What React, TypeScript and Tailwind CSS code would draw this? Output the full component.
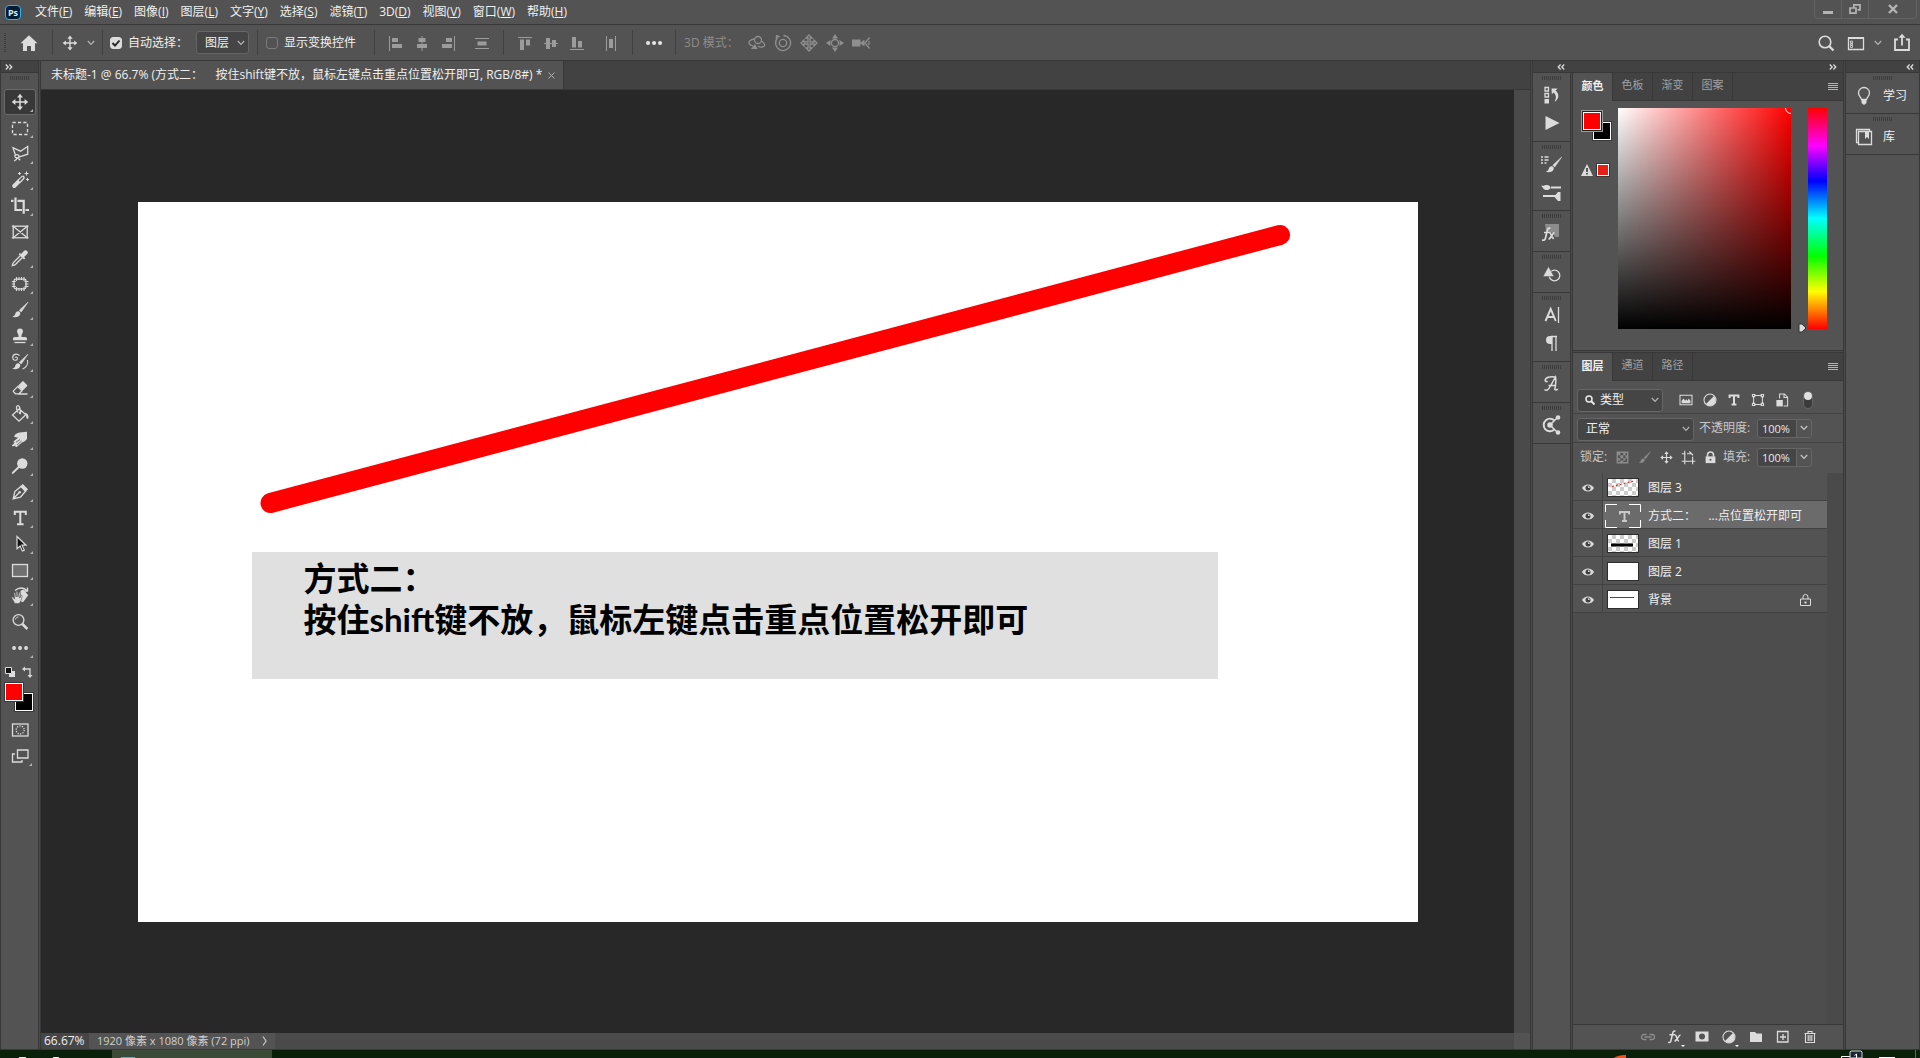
import React, { useState } from 'react';

type IconProps = { children: React.ReactNode; className?: string };

const Icon: React.FC<IconProps> = ({ children, className = 'size-5' }) => (
  <svg
    viewBox="0 0 20 20"
    className={`shrink-0 ${className}`}
    fill="none"
    stroke="currentColor"
    strokeWidth="1.3"
    aria-hidden="true"
  >
    {children}
  </svg>
);

const Chevron = ({ className = '' }: { className?: string }) => (
  <svg viewBox="0 0 8 6" className={`h-[6px] w-2 shrink-0 ${className}`} fill="none" stroke="currentColor" strokeWidth="1.2" aria-hidden="true">
    <path d="M.8 1 4 4.4 7.2 1" />
  </svg>
);

const DoubleChevron = ({ left = false }: { left?: boolean }) => (
  <svg viewBox="0 0 8 6" className="h-[6px] w-2" fill="none" stroke="#dcdcdc" strokeWidth="1.3" aria-hidden="true">
    {left ? <path d="M3.6.5 1.2 3l2.4 2.5M7.2.5 4.8 3l2.4 2.5" /> : <path d="M.8.5 3.2 3 .8 5.5M4.4.5 6.8 3 4.4 5.5" />}
  </svg>
);

const Grip = () => (
  <div className="mx-auto h-1 w-[19px] shrink-0 bg-[repeating-linear-gradient(90deg,#3d3d3d_0_1px,transparent_1px_2px)]" />
);

const Gutter = () => <div className="w-[3px] shrink-0 border-x border-[#383838] bg-[#4a4a4a]" />;

const Divider = () => <div className="h-[25px] w-px shrink-0 bg-[#404040]" />;

const moveShape = (
  <>
    <path d="M10 4v12M4 10h12" strokeWidth="1.5" />
    <path d="M10 1.8 12.9 5.4H7.1zM10 18.2 12.9 14.6H7.1zM1.8 10 5.4 7.1v5.8zM18.2 10 14.6 7.1v5.8z" fill="currentColor" stroke="none" />
  </>
);

const brushShape = (
  <>
    <path d="M18 2.2 9.3 10.2l1.9 1.9L18 2.2z" fill="currentColor" stroke="currentColor" strokeWidth=".6" />
    <path d="M8.2 11.2c-2 .2-2.6 1.3-3 2.8-.4 1.4-1.4 2.2-3 2.8 3.5.9 7.200.2 8-2.900.3-1.300-.6-2.700-2-2.700z" fill="currentColor" stroke="none" />
  </>
);

const menus = [
  ['文件', 'F'], ['编辑', 'E'], ['图像', 'I'], ['图层', 'L'], ['文字', 'Y'], ['选择', 'S'],
  ['滤镜', 'T'], ['3D', 'D'], ['视图', 'V'], ['窗口', 'W'], ['帮助', 'H'],
];

const tools: { name: string; icon: React.ReactNode; more?: boolean }[] = [
  { name: '移动工具', more: true, icon: moveShape },
  { name: '矩形选框工具', more: true, icon: <rect x="2.5" y="4.5" width="15" height="12" strokeDasharray="3.2 2.2" /> },
  {
    name: '多边形套索工具',
    more: true,
    icon: <path d="M5.6 11.8 3 3.7l7.500 3.500L17.700 2.500v7.700L9.500 12.800M4 17c1.800-.6 2.800-1.600 3-3.200M8.700 11.200c-1.300-1-3.700-.4-3.900.9-.1 1.400 2 2.200 3.400 1.500 1-.5 1.300-1.600.5-2.400zM7.300 13.500l3 2.800" />,
  },
  {
    name: '魔棒工具',
    more: true,
    icon: (
      <>
        <path d="m4.200 16 5.500-5.500" strokeWidth="4" strokeLinecap="round" />
        <path d="m9.500 11 3.300-3.400" strokeWidth="4" strokeLinecap="round" />
        <path d="m9.700 10.600 2.800-2.900" stroke="#535353" strokeWidth="1.6" strokeLinecap="round" />
        <path d="M9.500 2v3M8 3.500h3M16.500 1.500v4M14.500 3.500h4M17.500 8v3M16 9.500h3" strokeWidth="1" />
      </>
    ),
  },
  { name: '裁剪工具', more: true, icon: <path d="M5.5 1.5v12.500h6.500M1 4.800h2.500M7.500 4.800h6.200v13M15.500 14h3.500" strokeWidth="2.2" /> },
  {
    name: '图框工具',
    icon: (
      <>
        <rect x="3.2" y="4.2" width="14" height="11.6" />
        <path d="m3.500 4.500 13.500 11m0-11-13.500 11M1.800 4.200h2M1.800 15.800h2M16.500 4.200h2M16.500 15.800h2" />
      </>
    ),
  },
  {
    name: '吸管工具',
    more: true,
    icon: (
      <>
        <path d="m10.500 7.500-7 7c-1 1-.9 2.300-1.100 3 .8-.2 2 0 3-1l7-7" />
        <path d="m8.700 6.200 1.200-1.200 1.200 1.100 2.300-2.600c1-1.200 2.600-1.600 3.700-.6s.8 2.700-.4 3.700l-2.600 2.300 1.200 1.300-1.300 1.200z" fill="currentColor" stroke="none" />
      </>
    ),
  },
  {
    name: '修补工具',
    more: true,
    icon: (
      <>
        <rect x="4" y="5.2" width="12" height="9.6" rx="1.8" />
        <path d="M6.500 3v4M9 3v3M11.500 3v3M14 3v4M6.500 13v4M9 14v3M11.500 14v3M14 13v4M1.800 7.500h4M1.800 10h3M1.800 12.500h4M14.500 7.500h4M15 10h3.500M14.500 12.500h4" strokeWidth="1.1" />
      </>
    ),
  },
  { name: '画笔工具', more: true, icon: brushShape },
  {
    name: '仿制图章工具',
    more: true,
    icon: (
      <>
        <path d="M10 2.500a3 3 0 0 0-3 3c0 1.500 1.500 2.200 1.500 4.300v1.200H4.800c-1 0-1.800.8-1.800 1.800v1.500h14v-1.500c0-1-.8-1.800-1.800-1.800h-3.700V9.800c0-2.100 1.500-2.800 1.500-4.300a3 3 0 0 0-3-3z" fill="currentColor" stroke="none" />
        <path d="M4.500 16.500h11" />
      </>
    ),
  },
  {
    name: '历史记录画笔工具',
    more: true,
    icon: (
      <>
        {brushShape}
        <path d="M9.500 3.500C6.500.8 2.500 2.500 2.700 5.700c.1 2.900 3.900 3.400 4.700 1.300.5-1.700-1.500-2.600-2.300-1.300M17.500 8c.8 4-1.200 7.700-4.900 9" strokeWidth="1.1" />
      </>
    ),
  },
  {
    name: '橡皮擦工具',
    more: true,
    icon: (
      <>
        <path d="M7.800 8 12.300 3.600c.4-.4.9-.4 1.300 0l3.400 3.400c.4.4.4.9 0 1.300l-4.500 4.500z" fill="currentColor" stroke="none" />
        <path d="m7.600 8.600-4 4c-.4.4-.4.9 0 1.300l1.900 1.900h3.500l3-3zM8 16h9.500" />
      </>
    ),
  },
  {
    name: '油漆桶工具',
    more: true,
    icon: (
      <>
        <path d="M9.300 4.800 2.500 11l6.500 6.200 6.800-6.500zM8 8.500C6 5 6 2 7.700 1.700c1.800-.2 2.500 3 2.700 6.300" />
        <circle cx="10" cy="9" r="1.2" fill="currentColor" stroke="none" />
        <path d="M14.500 8.500c3 .5 4.200 2.500 4 5.200-.1 1.500-2 1.500-2.200 0 0-2.200-.3-3.700-1.800-5.200z" fill="currentColor" stroke="none" />
      </>
    ),
  },
  {
    name: '涂抹工具',
    more: true,
    icon: (
      <>
        <path d="M4.500 5.500C6 3.200 9 2.300 12 2.300l5-.5v7c-1.500 2.500-3 3.200-5 3.600l-5 4.300c-1 .9-2.200-.1-1.500-1.300l-2.200.9c-1.200.4-1.800-1-.8-1.600L5 12.500c-1.400.5-2-.9-1-1.600L8 7.800l-2-.6c-1.300.3-2.200-.6-1.500-1.700z" fill="currentColor" stroke="none" />
        <path d="m6 12.300 4-2.800M7 15l4.500-4" stroke="#535353" strokeWidth=".8" />
      </>
    ),
  },
  {
    name: '减淡工具',
    more: true,
    icon: (
      <>
        <circle cx="12.3" cy="7.5" r="5.2" fill="currentColor" stroke="none" />
        <path d="m8.500 11.300-5.700 5.600" strokeWidth="2" strokeLinecap="round" />
      </>
    ),
  },
  {
    name: '钢笔工具',
    more: true,
    icon: (
      <>
        <path d="M3.200 16.800 4.800 9.500 11 4.500l4.500 4.700-5 6zM3.500 16.500l5.300-5.500" />
        <circle cx="9.6" cy="10.3" r="1.3" fill="currentColor" stroke="none" />
        <path d="m10.500 4 2.300-2 5.200 5.200-2.200 2.500z" fill="currentColor" stroke="none" />
      </>
    ),
  },
  { name: '文字工具', more: true, icon: <path d="M4.800 7V3.700h11V7M10.300 3.700v12.600M7 16.300h6.600" strokeWidth="2" /> },
  { name: '路径选择工具', more: true, icon: <path d="M7 2.500v12.200l3.100-2.700 2.300 5 1.900-.9-2.300-4.900h4z" fill="#151515" strokeWidth="1.2" /> },
  { name: '矩形工具', more: true, icon: <rect x="2.5" y="4.5" width="15" height="12" fill="#707070" /> },
  {
    name: '旋转视图工具',
    more: true,
    icon: (
      <>
        <path d="m10.500 4.700 3-1.200 4.700 5.700-5.200 7-2.500-1z" fill="currentColor" stroke="none" />
        <path d="M4.800 17.500 1.800 12c-.4-1 .8-1.500 1.400-.7l1.500 1.800-.7-5.800c0-1 1.200-1.100 1.400-.1l.8 3.800V6c.1-.9 1.400-.9 1.500 0l.2 5 1-4.200c.3-.8 1.500-.5 1.300.4l-.5 4.900 1.200-2.400c.4-.7 1.500-.3 1.200.6-.7 3.200-1.200 5.500-3 7.200z" fill="currentColor" stroke="#535353" strokeWidth=".6" />
        <path d="M5 4.500c4-3.500 9-3.200 12 .2M17.500 1.500v3.700h-4" />
      </>
    ),
  },
  {
    name: '缩放工具',
    icon: (
      <>
        <circle cx="8.5" cy="8" r="5.4" />
        <path d="m12.400 12 5 5" strokeWidth="2.5" />
        <path d="M5.500 7.500c.3-1.500 1.500-2.500 3-2.600" strokeWidth="1" />
      </>
    ),
  },
  { name: '编辑工具栏', more: true, icon: <path d="M4 10h.1M10 10h.1M16 10h.1" strokeWidth="3.8" strokeLinecap="round" /> },
];

const alignIcons: { name: string; d: string; line: string; w: string }[] = [
  { name: '左对齐', w: 'w-[26px]', line: 'M3.500 3v15', d: 'M6 5h6v4H6zM6 11h10v4H6z' },
  { name: '水平居中对齐', w: 'w-[26px]', line: 'M10 3v15', d: 'M6.500 5h7v4h-7zM5 11h10v4H5z' },
  { name: '右对齐', w: 'w-[26px]', line: 'M16.500 3v15', d: 'M8 5h6v4H8zM4 11h10v4H4z' },
  { name: '垂直分布', w: 'w-[42px]', line: 'M3 5.500h14M3 15.500h14', d: 'M5.500 8.500h9v4h-9z' },
];

const alignIcons2: { name: string; d: string; line: string; w: string }[] = [
  { name: '顶对齐', w: 'w-[26px]', line: 'M3 4.500h14', d: 'M5 6.500h4v10.500H5zM11 6.500h4v6h-4z' },
  { name: '垂直居中对齐', w: 'w-[26px]', line: 'M3 10.500h14', d: 'M5 5h4v11H5zM11 7h4v7h-4z' },
  { name: '底对齐', w: 'w-[26px]', line: 'M3 16.500h14', d: 'M5 4h4v10.500H5zM11 8h4v6.500h-4z' },
  { name: '水平分布', w: 'w-[42px]', line: 'M5.500 3v15M14.500 3v15', d: 'M8 6h4v9H8z' },
];

const modes3d: { name: string; icon: React.ReactNode }[] = [
  { name: '环绕移动', icon: <><circle cx="11" cy="7" r="3.5" /><path d="M7.500 6C3 6.500 1 9 2.500 11c.8 1 2 1.500 3.500 2M14.300 8c4 2 4.500 5.500 1 6-1.500.2-3-.1-4.500-.7" /><path d="m4 16 4-5 2.500 5z" fill="currentColor" stroke="none" /></> },
  { name: '滚动', icon: <><circle cx="10" cy="10" r="3.7" /><path d="M4.500 5a7.500 7.500 0 1 0 6-2.500" /><path d="M2.500 6 3 1.800l4.500 1.500z" fill="currentColor" stroke="none" /></> },
  { name: '平移', icon: <path d="M10 2 7 5h2v4H5V7l-3 3 3 3v-2h4v4H7l3 3 3-3h-2v-4h4v2l3-3-3-3v2h-4V5h2z" /> },
  { name: '滑动', icon: <><circle cx="10" cy="10" r="3.500" /><path d="m10 1 3 4.500H7zM1 10l4.500-3v6zM19 10l-4.500-3v6zM10 19l-3-4.500h6z" fill="currentColor" stroke="none" /></> },
  { name: '缩放相机', icon: <><path d="M1 6.500h8.500v7H1zM9 10l4.500-3.500v7z" fill="currentColor" stroke="none" /><path d="m18.500 4.500-4.500 5.500 4.500 5.500M18 8v4" /></> },
];

const dockGroups: { name: string; icon: React.ReactNode }[][] = [
  [
    { name: '历史记录', icon: <><path d="M3 2.500h3.500V6H3zM3 8.500h3.500V12H3z" /><path d="M2.500 14H7v4.500H2.500z" fill="currentColor" stroke="none" /><path d="M9.500 3.500h6.200L13.500 5.500c4 3 4 8.500-1 11.500 2-4 2-6.500-.8-9.500L9.800 9.300z" fill="currentColor" stroke="none" /></> },
    { name: '动作', icon: <path d="M3.500 3 17.500 10l-14 7z" fill="currentColor" stroke="none" /> },
  ],
  [
    { name: '画笔设置', icon: <><path d="M-1 3h2M2.500 3h4M-1 6h2M2.500 6h4M-1 9h2M2.500 9h2" /><g transform="translate(1.5 1)">{brushShape}</g></> },
    { name: '画笔', icon: <><path d="M9 5.500h10M1 14h13" strokeWidth="2" /><path d="M-1 3.500c2.500.5 3 0 5-.5 2.500-.5 4.500 1 4.500 2.700S6 8 4 8C1.500 8 .5 5-1 3.500zM12 14.500l4-4.500h2.500v9H16z" fill="currentColor" stroke="none" /></> },
  ],
  [
    { name: '样式', icon: <><path d="M3 1h14v13h-4l-2-4-7-2z" fill="#8c8c8c" stroke="none" /><path d="M8.500 5.500C6 4.300 5.500 6 5 8.500L3.500 15c-.4 2-1.500 2.500-3.500 2M2 9.500h5.500M7.500 9.500c2 0 1.500 6 4.500 6M12.500 9.500c-2 0-3.500 6.500-6 6.500" strokeWidth="1.7" /></> },
  ],
  [
    { name: '形状', icon: <><circle cx="12.5" cy="11.5" r="5.3" /><path d="M6.500 2.500 12 12.500H1z" fill="currentColor" stroke="#535353" strokeWidth=".5" /></> },
  ],
  [
    { name: '字符', icon: <><path d="M3.500 16 8.700 4l5.100 12M5.500 12h6.400" strokeWidth="1.9" /><path d="M16.500 2v16" /></> },
    { name: '段落', icon: <><path d="M10 3H8a4 4 0 0 0 0 8h2z" fill="currentColor" stroke="none" /><path d="M9 3.500h6M10 3v15M14 3v15" /></> },
  ],
  [
    { name: '字形', icon: <path d="M2.500 15.500c2 2 4 0 6-3.500L13.500 3c.7 3 0 9-.7 12.500 1 .8 2 .5 3-.5M6.500 11.500H13M13 3C8 2 3.500 3.500 3.200 6c-.2 1.500 1.500 2 2.300 1" strokeWidth="1.5" /> },
  ],
  [
    { name: '属性', icon: <><circle cx="8" cy="10" r="6.300" strokeWidth="2" strokeDasharray="28 11" transform="rotate(50 8 10)" /><circle cx="8" cy="10" r="2.8" fill="currentColor" stroke="none" /><path d="m8 10 8-8M8 10l8 8" strokeWidth="1.5" /><circle cx="16" cy="2.500" r="2.3" fill="currentColor" stroke="none" /><circle cx="16" cy="17.5" r="2.3" fill="currentColor" stroke="none" /></> },
  ],
];

const layers = [
  { name: '图层 3', kind: 'dots' },
  { name: '方式二：\u00a0\u00a0\u00a0\u00a0...点位置松开即可', kind: 'text' },
  { name: '图层 1', kind: 'bar' },
  { name: '图层 2', kind: 'white' },
  { name: '背景', kind: 'bg' },
];

const halfCircle = (
  <>
    <circle cx="10" cy="10" r="7.500" />
    <path d="M15 5a7 7 0 0 1-10 10z" fill="currentColor" stroke="none" />
  </>
);

const Swatches = () => (
  <div className="relative h-[30px] w-[30px]">
    <button aria-label="背景色" className="absolute bottom-0 right-0 size-5 border border-[#383838] bg-black shadow-[inset_0_0_0_1px_#fff]" />
    <button aria-label="前景色" className="absolute left-0 top-0 size-5 border border-[#383838] bg-[#ff0000] shadow-[inset_0_0_0_1px_#fff]" />
  </div>
);

const MenuBar = () => (
  <header className="flex h-[25px] shrink-0 items-center border-b border-[#383838] pl-[5px] pr-[3px]">
    <div className="flex h-[15px] w-4 items-center justify-center rounded-sm border border-[#2fb4f5] bg-[#001d34] text-[9px] leading-none font-bold text-[#d8f0ff]">Ps</div>
    <nav className="flex flex-1 items-center gap-3 pl-[14px]">
      {menus.map(([label, key]) => (
        <button key={key} className="whitespace-nowrap">
          {label}(<u>{key}</u>)
        </button>
      ))}
    </nav>
    <div className="flex h-[19px] self-start rounded-b border border-t-0 border-[#636363] text-[#b4b4b4]">
      <button aria-label="最小化" className="flex w-[27px] items-center justify-center border-r border-[#636363]">
        <svg viewBox="0 0 12 12" className="size-3"><path d="M1 8h10v3H1z" fill="currentColor" /></svg>
      </button>
      <button aria-label="还原" className="flex w-[27px] items-center justify-center border-r border-[#636363]">
        <svg viewBox="0 0 12 12" className="size-3" fill="none" stroke="currentColor" strokeWidth="1.7"><path d="M4.800 4.500V1.900h6.200v5H8.500M1 5h6v5.200H1z" /></svg>
      </button>
      <button aria-label="关闭" className="flex w-[47px] items-center justify-center">
        <svg viewBox="0 0 12 12" className="size-3" fill="none" stroke="currentColor" strokeWidth="2.4"><path d="m2 2 8 8m0-8-8 8" /></svg>
      </button>
    </div>
  </header>
);

const OptionsBar = () => {
  const [autoSelect, setAutoSelect] = useState(true);
  const [transform, setTransform] = useState(false);

  return (
    <div className="flex h-9 shrink-0 items-center border-b border-[#383838] pl-1">
      <div className="h-5 w-[2px] shrink-0 bg-[repeating-linear-gradient(180deg,#3d3d3d_0_1px,transparent_1px_2px)]" />
      <button aria-label="主页" className="flex w-[46px] justify-center text-[#dcdcdc]">
        <Icon><path d="M10 2.300 1.500 10.300H4V18h4v-5h4v5h4v-7.700h2.500z" fill="currentColor" stroke="none" /></Icon>
      </button>
      <Divider />
      <button aria-label="移动工具预设" className="flex w-[49px] items-center justify-center gap-2 text-[#dcdcdc]">
        <Icon className="size-[18px]">{moveShape}</Icon>
        <Chevron className="text-[#b4b4b4]" />
      </button>
      <Divider />
      <label className="flex items-center gap-[6px] pl-[7px] whitespace-nowrap">
        <span className="relative flex size-3">
          <input
            type="checkbox"
            checked={autoSelect}
            onChange={(e) => setAutoSelect(e.target.checked)}
            className="peer size-3 appearance-none rounded-[3px] border border-[#7b7b7b] checked:border-[#dcdcdc] checked:bg-[#dcdcdc]"
          />
          <svg viewBox="0 0 12 12" className="pointer-events-none absolute inset-0 hidden size-3 peer-checked:block" fill="none" stroke="#222" strokeWidth="1.9"><path d="M2.500 6 5 8.700l4.500-5.200" /></svg>
        </span>
        自动选择：
      </label>
      <div className="relative ml-2 flex shrink-0 items-center">
        <select aria-label="自动选择对象" className="h-[23px] w-[53px] appearance-none rounded-[3px] border border-[#666] bg-[#454545] pl-2 text-xs">
          <option>图层</option>
          <option>组</option>
        </select>
        <Chevron className="pointer-events-none absolute right-1 text-[#b4b4b4]" />
      </div>
      <div className="w-2" />
      <Divider />
      <label className="flex items-center gap-[6px] pl-2 whitespace-nowrap">
        <input
          type="checkbox"
          checked={transform}
          onChange={(e) => setTransform(e.target.checked)}
          className="size-3 appearance-none rounded-[3px] border border-[#7b7b7b] checked:bg-[#dcdcdc]"
        />
        显示变换控件
      </label>
      <div className="w-[18px]" />
      <Divider />
      <div className="flex items-center pl-2 text-[#9c9c9c]">
        {alignIcons.map((a) => (
          <button key={a.name} aria-label={a.name} className={`flex justify-center ${a.w}`}>
            <Icon><path d={a.line} strokeWidth="1" /><path d={a.d} fill="currentColor" stroke="none" /></Icon>
          </button>
        ))}
      </div>
      <Divider />
      <div className="flex items-center pl-2 text-[#9c9c9c]">
        {alignIcons2.map((a) => (
          <button key={a.name} aria-label={a.name} className={`flex justify-center ${a.w}`}>
            <Icon><path d={a.line} strokeWidth="1" /><path d={a.d} fill="currentColor" stroke="none" /></Icon>
          </button>
        ))}
      </div>
      <Divider />
      <button aria-label="更多对齐选项" className="flex w-[42px] justify-center text-[#e4e4e4]">
        <Icon><path d="M4 10h.1M10 10h.1M16 10h.1" strokeWidth="4" strokeLinecap="round" /></Icon>
      </button>
      <Divider />
      <span className="pl-2 whitespace-nowrap text-[#8c8c8c]">3D 模式：</span>
      <div className="flex gap-[6px] pl-2 text-[#8f8f8f]">
        {modes3d.map((m) => (
          <button key={m.name} aria-label={m.name}><Icon>{m.icon}</Icon></button>
        ))}
      </div>
      <div className="ml-auto flex items-center pr-2 text-[#dcdcdc]">
        <button aria-label="搜索" className="mr-[10px]">
          <Icon><circle cx="9" cy="9" r="5.8" strokeWidth="1.6" /><path d="m13 13 4.500 4.500" strokeWidth="2.3" /></Icon>
        </button>
        <button aria-label="选择工作区" className="flex items-center gap-2">
          <Icon><path d="M2.500 5h15v11.500h-15zM2 5h16" /><path d="M2 4h16v2H2z" fill="currentColor" stroke="none" /><path d="M4.500 8h2v2h-2zM4.500 10.500h2v1.500h-2zM4.500 12.500h2v2h-2z" strokeWidth=".8" /></Icon>
          <Chevron className="text-[#b4b4b4]" />
        </button>
        <button aria-label="共享图像" className="ml-[10px]">
          <Icon><path d="M6 6.500H3V17h14V6.500h-3M10 12.500V4" strokeWidth="1.8" /><path d="m10 .8 3.500 4h-7z" fill="currentColor" stroke="none" /></Icon>
        </button>
      </div>
    </div>
  );
};

const Toolbar = () => {
  const [active, setActive] = useState('移动工具');

  return (
    <aside className="flex w-[38px] shrink-0 flex-col border-l border-[#383838] text-[#dcdcdc]">
      <div className="flex h-3 items-center border-b border-[#383838] bg-[#424242] pl-1"><DoubleChevron /></div>
      <div className="flex flex-col items-center pt-[3px]">
        <Grip />
        <div className="flex flex-col pt-[9px]">
          {tools.map((t) => (
            <button
              key={t.name}
              aria-label={t.name}
              onClick={() => setActive(t.name)}
              className={`relative flex h-[26px] w-8 items-center justify-center rounded-[3px] border ${
                active === t.name ? 'border-[#6a6a6a] bg-[#383838]' : 'border-transparent'
              }`}
            >
              <Icon>{t.icon}</Icon>
              {t.more && <svg viewBox="0 0 3 3" className="absolute bottom-[2px] right-[2px] size-[3px]"><path d="M3 0v3H0z" fill="#b4b4b4" /></svg>}
            </button>
          ))}
        </div>
        <div className="flex w-full items-center justify-between px-1 pt-[5px]">
          <button aria-label="默认前景色和背景色">
            <svg viewBox="0 0 10 10" className="size-[10px]"><path d="M4 4h6v6H4z" fill="#dcdcdc" /><path d="M.5.5h6v6h-6z" fill="#111" stroke="#dcdcdc" /></svg>
          </button>
          <button aria-label="切换前景色和背景色">
            <svg viewBox="0 0 12 12" className="size-3" fill="none" stroke="#dcdcdc" strokeWidth="1.3"><path d="M2 3h6v7" /><path d="M0 3 3 .5v5zM8 12l-2.500-3h5z" fill="#dcdcdc" stroke="none" /></svg>
          </button>
        </div>
        <div className="w-full pl-[3px] pt-1"><Swatches /></div>
        <button aria-label="以快速蒙版模式编辑" className="pt-2">
          <Icon><rect x="2.500" y="4" width="15.500" height="12" /><circle cx="10.2" cy="10" r="4" strokeDasharray="1.2 1.3" /></Icon>
        </button>
        <button aria-label="更改屏幕模式" className="relative pt-[6px]">
          <Icon><path d="M7.500 4H18v8H7.500z" /><path d="M5 8H2.500v8h9.500v-2" /></Icon>
          <svg viewBox="0 0 3 3" className="absolute -right-[2px] bottom-0 size-[3px]"><path d="M3 0v3H0z" fill="#b4b4b4" /></svg>
        </button>
      </div>
    </aside>
  );
};

const Document = () => (
  <main className="flex min-w-0 flex-1 flex-col">
    <div className="flex h-[29px] shrink-0 border-b border-[#383838] bg-[#424242]">
      <div className="flex items-center gap-[6px] border-r border-[#383838] bg-[#535353] pr-2 pl-[10px] whitespace-nowrap">
        <span>未标题-1 @ 66.7% (方式二：{'\u00a0\u00a0\u00a0\u00a0'}按住shift键不放，鼠标左键点击重点位置松开即可, RGB/8#) *</span>
        <button aria-label="关闭文档" className="text-[#b4b4b4]">
          <svg viewBox="0 0 7 7" className="size-[7px]" fill="none" stroke="currentColor"><path d="m.5.5 6 6m0-6-6 6" /></svg>
        </button>
      </div>
    </div>
    <div className="flex min-h-0 flex-1">
      <div className="flex min-w-0 flex-1 items-center justify-center overflow-hidden bg-[#282828]">
        <div className="relative aspect-video w-full max-w-[1280px] bg-white text-black">
          <svg viewBox="0 0 1280 720" className="absolute inset-0 size-full" aria-hidden="true">
            <path d="M132.500 301 1142 33" stroke="#ff0000" strokeWidth="20" strokeLinecap="round" />
          </svg>
          <p className="absolute left-[114px] top-[350px] h-[127px] w-[966px] bg-[#e0e0e0] py-[6px] pl-[52px] text-[33px] leading-[41px] font-bold whitespace-nowrap font-['Lato','Noto_Sans_CJK_SC',sans-serif]">
            方式二：
            <br />
            按住shift键不放，鼠标左键点击重点位置松开即可
          </p>
        </div>
      </div>
      <div className="w-4 shrink-0 bg-[#4a4a4a]" />
    </div>
    <div className="flex h-4 shrink-0 items-center bg-[#4a4a4a] leading-4 whitespace-nowrap">
      <input aria-label="缩放比例" defaultValue="66.67%" className="h-4 w-12 bg-[#464646] pl-[3px] text-xs" />
      <div className="flex h-4 items-center gap-3 bg-[#535353] px-2">
        <span className="text-[11px] text-[#d0d0d0]">1920 像素 x 1080 像素 (72 ppi)</span>
        <button aria-label="状态栏菜单">
          <svg viewBox="0 0 5 10" className="h-[10px] w-[5px]" fill="none" stroke="#c8c8c8" strokeWidth="1.2"><path d="M1 .5 4 5 1 9.500" /></svg>
        </button>
      </div>
      <div className="ml-auto h-4 w-4 bg-[#535353]" />
    </div>
  </main>
);

const PanelTabs = ({ tabs }: { tabs: string[] }) => (
  <div role="tablist" className="flex h-7 shrink-0 bg-[#424242]">
    {tabs.map((t, i) => (
      <button
        key={t}
        role="tab"
        aria-selected={i === 0}
        className={`w-10 border-r border-[#383838] pb-[2px] text-[11px] ${i === 0 ? 'bg-[#535353] font-bold' : 'border-b text-[#a0a0a0]'}`}
      >
        {t}
      </button>
    ))}
    <div className="flex flex-1 items-center justify-end border-b border-[#383838] pr-[5px]">
      <button aria-label="面板菜单">
        <svg viewBox="0 0 10 8" className="h-2 w-[10px]" stroke="#b4b4b4"><path d="M0 .5h10M0 2.500h10M0 4.500h10M0 6.500h10" /></svg>
      </button>
    </div>
  </div>
);

const ColorPanel = () => (
  <section className="shrink-0">
    <PanelTabs tabs={['颜色', '色板', '渐变', '图案']} />
    <div className="flex pb-[21px] pl-2 pt-[7px]">
      <div className="w-[37px] shrink-0 pt-[2px]">
        <div className="relative h-[31px] w-[31px]">
          <button aria-label="背景色" className="absolute bottom-0 right-0 size-5 border border-[#383838] bg-black shadow-[inset_0_0_0_1px_#fff]" />
          <button aria-label="前景色" className="absolute left-0 top-0 size-[22px] border border-[#9a9a9a] bg-[#ff0000] shadow-[inset_0_0_0_1px_#222,inset_0_0_0_2px_#fff]" />
        </div>
        <div className="flex items-center gap-[3px] pt-[22px]">
          <svg viewBox="0 0 12 12" className="size-3"><path d="M6 0 12 12H0z" fill="#dcdcdc" /><path d="M5.200 4h1.600v4H5.200zM5.200 9h1.600v1.600H5.200z" fill="#333" /></svg>
          <button aria-label="选择色域内的颜色" className="size-[14px] border border-[#383838] bg-[#e71f19] shadow-[inset_0_0_0_1px_#fff]" />
        </div>
      </div>
      <div className="relative h-[221px] flex-1 overflow-hidden bg-[linear-gradient(to_top,#000,transparent),linear-gradient(to_right,#fff,#f00)]">
        <div className="absolute -right-[6px] -top-[6px] size-3 rounded-full border border-white" />
      </div>
      <div className="relative ml-[17px] mr-4 w-[19px] shrink-0 bg-[linear-gradient(to_bottom,#f00,#f0f_17%,#00f_33%,#0ff_50%,#0f0_67%,#ff0_83%,#f00)]">
        <input type="range" min="0" max="360" defaultValue="0" aria-label="色相" className="absolute inset-0 size-full opacity-0" />
        <svg viewBox="0 0 9 10" className="absolute -bottom-1 -left-[10px] h-[10px] w-[9px]"><path d="M1 1h3l4 4-4 4H1z" fill="#dcdcdc" stroke="#333" /></svg>
      </div>
    </div>
  </section>
);

const filterIcons: { name: string; icon: React.ReactNode }[] = [
  { name: '像素图层滤镜', icon: <><path d="M2.500 4h15v12h-15z" /><path d="M4.500 14V11l2.500-3 2 3 1.500-2L12 11l1.500-3 2 3v3z" fill="currentColor" stroke="none" /></> },
  { name: '调整图层滤镜', icon: halfCircle },
  { name: '文字图层滤镜', icon: <path d="M4.500 7.500V4.500h11v3M10 4.500v11M7 15.500h6" strokeWidth="2.5" /> },
  { name: '形状图层滤镜', icon: <path d="M5 4.500h10M5 15.500h10M4.500 5v10M15.500 5v10M3 3h3v3H3zM14 3h3v3h-3zM3 14h3v3H3zM14 14h3v3h-3z" /> },
  { name: '智能对象滤镜', icon: <><path d="M7 8V2.500h6l4 4v11h-5M12.500 3v4H17" /><path d="M3 10h8v8H3z" fill="currentColor" stroke="none" /></> },
];

const lockIcons: { name: string; icon: React.ReactNode; dim?: boolean }[] = [
  { name: '锁定透明像素', dim: true, icon: <><path d="M3 3h14v14H3z" strokeWidth="1.8" /><path d="M3 3h4v4H3zM11 3h3v4h-3zM7 7h4v4H7zM14 7h3v4h-3zM3 11h4v3H3zM11 11h3v3h-3zM7 14h4v3H7z" fill="currentColor" stroke="none" /></> },
  { name: '锁定图像像素', dim: true, icon: brushShape },
  { name: '锁定位置', icon: moveShape },
  { name: '防止自动嵌套', icon: <path d="M5 1v18M1 5h5M8 5h6.500M1 15h18M15.500 9v10M11 2l5 5" strokeWidth="1.5" /> },
  { name: '锁定全部', icon: <><path d="M6 9V6.500a4 4 0 0 1 8 0V9" strokeWidth="2" /><path d="M3.500 8.500h13v9h-13z" fill="currentColor" stroke="none" /><circle cx="10" cy="13" r="1.3" fill="#535353" stroke="none" /></> },
];

const PercentField = ({ label }: { label: string }) => (
  <div className="ml-auto mr-[31px] flex items-center gap-1">
    <label className="flex items-center gap-1 whitespace-nowrap text-[#c8c8c8]">
      <span className="flex">{label}<span className="w-[6px]">:</span></span>
      <input type="text" defaultValue="100%" className="h-[19px] w-10 rounded-l-[3px] border border-[#666] bg-[#454545] pl-1 text-[11px] text-[#e8e8e8]" />
    </label>
    <button aria-label={`${label}滑块`} className="-ml-[5px] flex h-[19px] w-4 items-center justify-center rounded-r-[3px] border border-[#666] text-[#c8c8c8]">
      <Chevron />
    </button>
  </div>
);

const checker = 'bg-[repeating-conic-gradient(#ccc_0_25%,#fff_0_50%)] bg-[length:8px_8px]';

const Thumb = ({ kind }: { kind: string }) => {
  if (kind === 'text') {
    return (
      <svg viewBox="0 0 36 24" className="h-6 w-9 shrink-0" fill="none" stroke="#fff">
        <path d="M.5 8V.5H12M24 .5h11.500V8M35.500 16v7.500H24M12 23.500H.5V16" />
        <path d="M15 10.500V8h9v2.500M19.500 8v9M17 17h5" stroke="#c8c8c8" strokeWidth="2" />
      </svg>
    );
  }
  return (
    <span className={`mx-[2px] h-[19px] w-8 shrink-0 border border-[#2d2d2d] ${kind === 'dots' || kind === 'bar' ? checker : 'bg-white'}`}>
      <svg viewBox="0 0 30 17" className="size-full" fill="none">
        {kind === 'dots' && <path d="M4 7.500 26 2" stroke="#f00" strokeDasharray="2 2" />}
        {kind === 'bar' && <path d="M3 10h22" stroke="#000" strokeWidth="3" />}
        {kind === 'bg' && <path d="M2 6.500h24" stroke="#f00" />}
      </svg>
    </span>
  );
};

const LayersPanel = () => {
  const [selected, setSelected] = useState(1);

  return (
    <section className="flex min-h-0 flex-1 flex-col">
      <PanelTabs tabs={['图层', '通道', '路径']} />
      <div className="flex h-[33px] shrink-0 items-center border-b border-[#424242] pt-[6px] pl-1">
        <div className="relative flex items-center">
          <svg viewBox="0 0 10 10" className="pointer-events-none absolute left-2 size-[10px]" fill="none" stroke="#e8e8e8"><circle cx="4" cy="4" r="3" strokeWidth="1.5" /><path d="m6 6 3.500 3.500" strokeWidth="2" /></svg>
          <select aria-label="图层滤镜类型" className="h-[23px] w-[86px] appearance-none rounded-[3px] border border-[#666] bg-[#454545] pl-[22px] text-xs">
            <option>类型</option>
            <option>名称</option>
          </select>
          <Chevron className="pointer-events-none absolute right-1 text-[#b4b4b4]" />
        </div>
        <div className="flex flex-1 items-center gap-2 pl-[15px] text-[#dcdcdc]">
          {filterIcons.map((f) => (
            <button key={f.name} aria-label={f.name}><Icon className="size-4">{f.icon}</Icon></button>
          ))}
        </div>
        <button aria-label="打开或关闭图层滤镜" className="mr-[30px] flex h-[18px] w-[10px] items-start justify-center rounded-full border border-[#666] bg-[#3a3a3a]">
          <span className="block size-2 rounded-full bg-[#e0e0e0]" />
        </button>
      </div>
      <div className="flex h-[29px] shrink-0 items-center border-b border-[#424242] pl-1">
        <div className="relative flex items-center pt-[2px]">
          <select aria-label="混合模式" className="h-[23px] w-[117px] appearance-none rounded-[3px] border border-[#666] bg-[#454545] pl-2 text-xs">
            <option>正常</option>
            <option>正片叠底</option>
          </select>
          <Chevron className="pointer-events-none absolute right-1 text-[#b4b4b4]" />
        </div>
        <PercentField label="不透明度" />
      </div>
      <div className="flex h-[30px] shrink-0 items-center pb-[2px] pl-[7px]">
        <span className="text-[#c8c8c8]">锁定:</span>
        <div className="flex items-center gap-[7px] pl-2">
          {lockIcons.map((l) => (
            <button key={l.name} aria-label={l.name} className={l.dim ? 'text-[#8c8c8c]' : 'text-[#dcdcdc]'}>
              <Icon className="size-[15px]">{l.icon}</Icon>
            </button>
          ))}
        </div>
        <PercentField label="填充" />
      </div>
      <div className="flex min-h-0 flex-1 bg-[#4d4d4d]">
        <ul className="flex-1">
          {layers.map((l, i) => (
            <li key={l.name} className="flex h-7 border-b border-[#424242] bg-[#535353]">
              <button aria-label={`显示 ${l.name}`} className="flex w-[30px] shrink-0 items-center justify-center border-r border-[#424242] pt-[2px] text-[#dcdcdc]">
                <svg viewBox="0 0 12 8" className="h-2 w-3"><path d="M0 4C2.500-.8 9.500-.8 12 4 9.500 8.800 2.500 8.800 0 4z" fill="currentColor" /><circle cx="6" cy="4" r="2.5" fill="#3f3f3f" /><circle cx="6.8" cy="3.2" r=".9" fill="#dcdcdc" /></svg>
              </button>
              <button
                onClick={() => setSelected(i)}
                className={`flex min-w-0 flex-1 items-center gap-[7px] pt-[2px] pl-[2px] text-left whitespace-nowrap ${selected === i ? 'bg-[#6b6b6b]' : ''}`}
              >
                <Thumb kind={l.kind} />
                <span>{l.name}</span>
                {l.kind === 'bg' && (
                  <svg viewBox="0 0 11 12" className="ml-auto mr-4 h-3 w-[11px]" fill="none" stroke="#dcdcdc"><path d="M.5 5h10v6.500H.5zM3 5V3a2.500 2.500 0 0 1 5 0v2" /><path d="M4.500 7.500h2v2h-2z" fill="#dcdcdc" stroke="none" /></svg>
                )}
              </button>
            </li>
          ))}
        </ul>
        <div className="w-4 shrink-0 bg-[#4a4a4a]" />
      </div>
      <div className="flex h-[25px] shrink-0 items-center justify-end gap-[7px] border-t border-[#383838] pr-[23px] text-[#dcdcdc]">
        <button aria-label="链接图层" className="text-[#8c8c8c]">
          <Icon><path d="M8.500 7.500H6a2.500 2.500 0 0 0 0 5h2.500M11.500 7.500H14a2.500 2.500 0 0 1 0 5h-2.500M6.500 10h7" /></Icon>
        </button>
        <button aria-label="添加图层样式" className="relative">
          <Icon><path d="M10.500 4.300C8.500 3.300 8 5 7.500 7L6 13.500c-.4 2-1.500 2.300-2.800 1.800M4.500 7.700H10M10 8c2 0 1.500 6 4 6M15.500 8c-2 0-3.500 6-6 6" strokeWidth="1.5" /></Icon>
          <svg viewBox="0 0 4 2" className="absolute bottom-0 right-0 h-[2px] w-1"><path d="M0 0h4L2 2z" fill="#fff" /></svg>
        </button>
        <button aria-label="添加图层蒙版">
          <Icon><path d="M3.500 4.500h13v10h-13z" fill="currentColor" stroke="none" /><circle cx="10" cy="9.5" r="3" fill="#535353" stroke="none" /></Icon>
        </button>
        <button aria-label="创建新的填充或调整图层" className="relative">
          <Icon><g transform="translate(2 2) scale(.8)">{halfCircle}</g></Icon>
          <svg viewBox="0 0 4 2" className="absolute bottom-0 right-0 h-[2px] w-1"><path d="M0 0h4L2 2z" fill="#fff" /></svg>
        </button>
        <button aria-label="创建新组">
          <Icon><path d="M4 5h5l1.500 1.500H16V15H4z" fill="currentColor" stroke="none" /></Icon>
        </button>
        <button aria-label="创建新图层">
          <Icon><path d="M4.500 4.500h10.500v10.500H4.500zM10 7v6M7 10h6" /></Icon>
        </button>
        <button aria-label="删除图层">
          <Icon><path d="M4.500 6.500h11M8 6V4.500h4V6M5.500 6.500v9h9v-9M8.200 8v6M10 8v6M11.800 8v6" strokeWidth="1.1" /></Icon>
        </button>
      </div>
    </section>
  );
};

const Dock = () => (
  <aside className="flex shrink-0">
    <div className="flex flex-col">
      <div className="flex h-3 shrink-0 items-center justify-between border-b border-[#383838] bg-[#424242] pl-6 pr-[6px]">
        <DoubleChevron left />
        <DoubleChevron />
      </div>
      <div className="flex min-h-0 flex-1">
        <div className="w-[37px] shrink-0 text-[#dcdcdc]">
          {dockGroups.map((group, i) => (
            <div key={i} className="flex flex-col border-b border-[#383838] pb-[4px] pt-[3px]">
              <Grip />
              <div className="flex flex-col pt-px">
                {group.map((g) => (
                  <button key={g.name} aria-label={g.name} className="flex h-7 items-center justify-center">
                    <Icon className="size-5 overflow-visible">{g.icon}</Icon>
                  </button>
                ))}
              </div>
            </div>
          ))}
        </div>
        <Gutter />
        <div className="flex w-[270px] flex-col">
          <ColorPanel />
          <div className="h-[3px] shrink-0 border-y border-[#383838] bg-[#4a4a4a]" />
          <LayersPanel />
        </div>
      </div>
    </div>
    <Gutter />
    <div className="w-[74px] border-r border-[#383838]">
      <div className="flex h-3 items-center justify-end border-b border-[#383838] bg-[#424242] pr-[5px]"><DoubleChevron left /></div>
      <div className="border-b border-[#383838] pb-[3px] pt-[3px]">
        <Grip />
        <button className="flex h-[30px] items-center gap-[9px] pt-[2px] pl-2">
          <Icon className="size-5 text-[#dcdcdc]"><path d="M7.500 13.500c0-2-3-3.200-3-6.500a5.500 5.500 0 0 1 11 0c0 3.300-3 4.500-3 6.500z" /><path d="M7.500 14h5v3L10 19l-2.500-2z" fill="currentColor" stroke="none" /></Icon>
          学习
        </button>
      </div>
      <div className="border-b border-[#383838] pb-[3px] pt-[3px]">
        <Grip />
        <button className="flex h-[30px] items-center gap-[9px] pt-[2px] pl-2">
          <Icon className="size-5 text-[#dcdcdc]"><path d="M4.500 4.500h13v13h-13zM4 15.500H2.500V2.500h13V4" /><path d="M11 5h4v7l-2-2-2 2z" fill="currentColor" stroke="none" /></Icon>
          库
        </button>
      </div>
    </div>
  </aside>
);

// strip of the system taskbar that shows below the window
const Taskbar = () => (
  <footer className="flex h-2 shrink-0 overflow-hidden bg-[#0a200b]">
    <svg viewBox="0 0 112 8" className="h-2 w-28 shrink-0"><path d="M19 7h7v1h-7zM53 7h6v1h-6z" fill="#e8e8e8" /></svg>
    <svg viewBox="0 0 160 8" className="h-2 w-40 shrink-0 bg-[#3b4b38]"><path d="M9 7h14v1H9z" fill="#2fb4f5" /></svg>
    <svg viewBox="0 0 310 8" className="ml-auto h-2 w-[310px] shrink-0">
      <path d="M4 8c2-2 7-3 12-3v3z" fill="#f4511e" />
      <path d="M231.500 8V6.500H240" stroke="#fff" fill="none" />
      <path d="M240 8V2l1-1h10l1 1v6z" fill="#1c2536" stroke="#d8d8d8" />
      <path d="M244.500 5.500 246.500 4v4M269 7.500h16" stroke="#fff" fill="none" />
      <path d="M305.500 0v8" stroke="#5a6a58" />
    </svg>
  </footer>
);

export default function App() {
  return (
    <div className="flex h-screen flex-col overflow-hidden bg-[#535353] font-['Open_Sans','Noto_Sans_CJK_SC',sans-serif] text-xs text-[#f0f0f0]">
      <MenuBar />
      <OptionsBar />
      <div className="flex min-h-0 flex-1 border-b border-[#383838]">
        <Toolbar />
        <Gutter />
        <Document />
        <Gutter />
        <Dock />
      </div>
      <Taskbar />
    </div>
  );
}
